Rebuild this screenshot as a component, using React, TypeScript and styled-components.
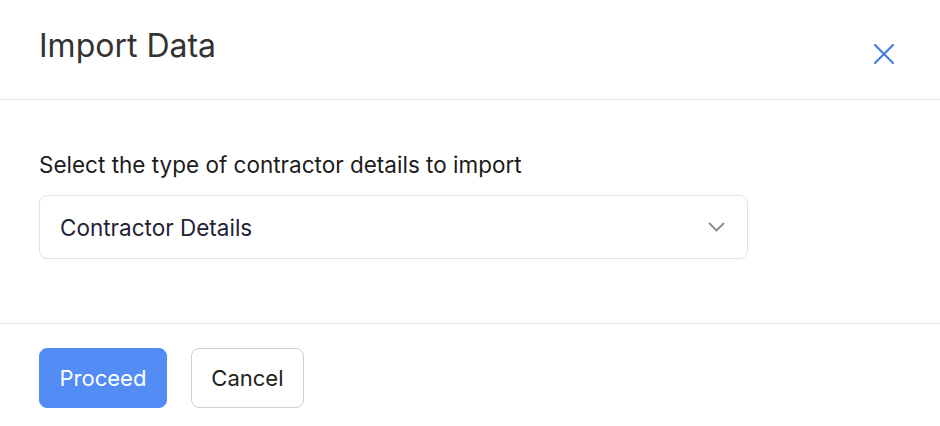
import React, { FC } from 'react';
import styled, { createGlobalStyle } from 'styled-components';

const GlobalStyle = createGlobalStyle`
	html, body {
		margin: 0;
		padding: 0;
		background: #ffffff;
		font-family: Inter, 'Noto Sans', sans-serif;
	}
`;

const Modal = styled.div`
	width: 940px;
	height: 426px;
	display: flex;
	flex-direction: column;
	background: #ffffff;
	overflow: hidden;
`;

const Header = styled.header`
	flex-shrink: 0;
	height: 100px;
	box-sizing: border-box;
	padding: 27px 39px 0 39px;
	display: flex;
	justify-content: space-between;
	align-items: flex-start;
	border-bottom: 1px solid #e3e3e3;
`;

const Title = styled.h1`
	margin: 0;
	font-size: 32px;
	line-height: 38px;
	font-weight: 400;
	color: #333333;
`;

const CloseButton = styled.button`
	margin-top: 16px;
	margin-right: 6px;
	width: 22px;
	height: 22px;
	padding: 0;
	border: none;
	background: transparent;
	display: flex;
	align-items: center;
	justify-content: center;
	cursor: pointer;
`;

const Body = styled.section`
	flex-shrink: 0;
	padding: 52px 39px 64px 39px;
	display: flex;
	flex-direction: column;
	gap: 17px;
	border-bottom: 1px solid #e3e3e3;
`;

const Label = styled.label`
	font-size: 22.5px;
	line-height: 26px;
	color: #1c1c1c;
`;

const Select = styled.div`
	width: 709px;
	height: 64px;
	box-sizing: border-box;
	padding: 0 22px 0 20px;
	border: 1px solid #e2e2e2;
	border-radius: 8px;
	display: flex;
	align-items: center;
	justify-content: space-between;
	font-size: 22.5px;
	color: #1f2336;
	cursor: pointer;
`;

const Footer = styled.footer`
	flex-shrink: 0;
	padding: 24px 39px;
	display: flex;
	gap: 24px;
`;

const Button = styled.button<{ $primary?: boolean }>`
	height: 60px;
	box-sizing: border-box;
	padding: 0 19.5px;
	border-radius: 8px;
	font-family: Inter, 'Noto Sans', sans-serif;
	font-size: 22px;
	cursor: pointer;
	border: 1px solid ${(p) => (p.$primary ? '#528cf4' : '#cfcfcf')};
	background: ${(p) => (p.$primary ? '#528cf4' : '#ffffff')};
	color: ${(p) => (p.$primary ? '#ffffff' : '#222222')};
`;

const App: FC = () => {
	return (
		<>
			<GlobalStyle />
			<Modal>
				<Header>
					<Title>Import Data</Title>
					<CloseButton aria-label='Close'>
						<svg width='20' height='20' viewBox='0 0 20 20'>
							<path d='M1 1 L19 19 M19 1 L1 19' stroke='#4a7fd6' strokeWidth='2.2' strokeLinecap='square' />
						</svg>
					</CloseButton>
				</Header>
				<Body>
					<Label>Select the type of contractor details to import</Label>
					<Select>
						<span>Contractor Details</span>
						<svg width='17' height='10' viewBox='0 0 17 10'>
							<path d='M1 1 L8.5 8.5 L16 1' fill='none' stroke='#8a8a8a' strokeWidth='1.8' />
						</svg>
					</Select>
				</Body>
				<Footer>
					<Button $primary>Proceed</Button>
					<Button>Cancel</Button>
				</Footer>
			</Modal>
		</>
	);
};

export default App;
